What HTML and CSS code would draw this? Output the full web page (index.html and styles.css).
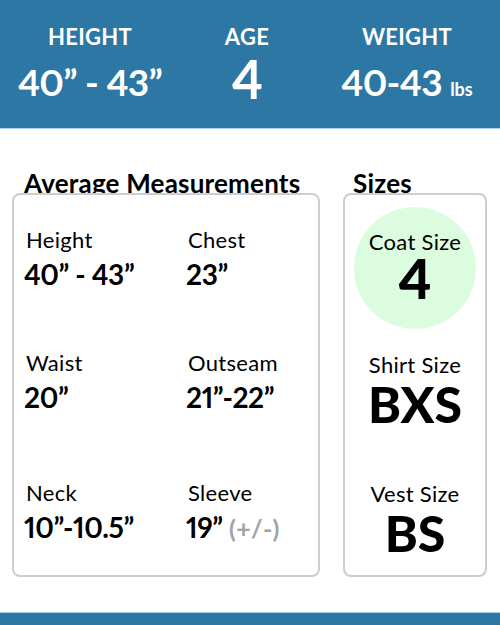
FILE: index.html
```html
<!DOCTYPE html>
<html>

<head>
    <title>Size Chart - Age 4</title>
    <link rel="stylesheet" href="styles.css">
</head>

<body>
    <div id="stats">
        <div class="stat">
            <div class="stat-label">HEIGHT</div>
            <div class="stat-value">40” - 43”</div>
        </div>
        <div class="stat">
            <div class="stat-label">AGE</div>
            <div class="stat-value stat-age">4</div>
        </div>
        <div class="stat">
            <div class="stat-label">WEIGHT</div>
            <div class="stat-value">40-43 <span class="unit">lbs</span></div>
        </div>
    </div>

    <div id="content">
        <div class="panel panel-measure">
            <h2>Average Measurements</h2>
            <div class="box measure-grid">
                <div class="item">
                    <div class="item-label">Height</div>
                    <div class="item-value">40” - 43”</div>
                </div>
                <div class="item">
                    <div class="item-label">Chest</div>
                    <div class="item-value">23”</div>
                </div>
                <div class="item">
                    <div class="item-label">Waist</div>
                    <div class="item-value">20”</div>
                </div>
                <div class="item">
                    <div class="item-label">Outseam</div>
                    <div class="item-value">21”-22”</div>
                </div>
                <div class="item">
                    <div class="item-label">Neck</div>
                    <div class="item-value">10”-10.5”</div>
                </div>
                <div class="item">
                    <div class="item-label">Sleeve</div>
                    <div class="item-value">19” <span class="approx">(+/-)</span></div>
                </div>
            </div>
        </div>

        <div class="panel panel-sizes">
            <h2>Sizes</h2>
            <div class="box sizes-list">
                <div class="size size-coat">
                    <div class="size-label">Coat Size</div>
                    <div class="size-value coat-value">4</div>
                </div>
                <div class="size size-shirt">
                    <div class="size-label">Shirt Size</div>
                    <div class="size-value">BXS</div>
                </div>
                <div class="size size-vest">
                    <div class="size-label">Vest Size</div>
                    <div class="size-value">BS</div>
                </div>
            </div>
        </div>
    </div>

    <div id="footer"></div>
</body>

</html>
```

FILE: styles.css
```css
body {
    margin: 0;
    padding: 0;
    font-family: Lato, "Open Sans", sans-serif;
    font-variant-numeric: proportional-nums;
    color: #000;
    background: #fff;
}

#stats {
    display: grid;
    grid-template-columns: 180px 134px 186px;
    height: 129px;
    background-color: #2d77a4;
    border-bottom: 1px solid #a9d3ee;
    color: #fff;
    text-align: center;
    box-sizing: border-box;
}

.stat-label {
    padding-top: 25px;
    font-size: 22px;
    line-height: 24px;
    letter-spacing: 0.3px;
    font-weight: 700;
}

.stat-value {
    margin-top: 11px;
    font-size: 37px;
    line-height: 44px;
    letter-spacing: -0.7px;
    font-weight: 700;
}

.stat-age {
    margin-top: 8px;
    font-size: 53px;
}

.unit {
    font-size: 18px;
    letter-spacing: 0;
}

#content {
    display: flex;
    gap: 23px;
    padding: 39px 13px 0 12px;
}

.panel h2 {
    position: relative;
    margin: 0 0 -5px 12px;
    font-size: 26px;
    line-height: 30px;
    letter-spacing: 0.2px;
    font-weight: 700;
}

.panel-sizes h2 {
    margin-left: 10px;
}

.box {
    position: relative;
    background: #fff;
    border: 2px solid #cdcdcd;
    border-radius: 8px;
    height: 384px;
    box-sizing: border-box;
}

.panel-measure {
    width: 308px;
}

.panel-sizes {
    flex: 1;
}

.measure-grid {
    display: grid;
    grid-template-columns: 162px 1fr;
    grid-template-rows: 123px 130px auto;
    padding: 33px 0 0 10px;
}

.item-label {
    font-size: 22px;
    line-height: 24px;
    letter-spacing: 0.3px;
    padding-left: 2px;
}

.item-value {
    margin-top: 5px;
    font-size: 28px;
    line-height: 34px;
    letter-spacing: -0.4px;
    font-weight: 700;
}

.approx {
    color: #9ba5aa;
    font-size: 25px;
    letter-spacing: 0.3px;
}

.sizes-list {
    display: flex;
    flex-direction: column;
    align-items: center;
    text-align: center;
}

.size-label {
    font-size: 22px;
    line-height: 22px;
    letter-spacing: 0.3px;
}

.size-value {
    margin-top: 8px;
    font-size: 50px;
    line-height: 40px;
    font-weight: 900;
}

.size-coat {
    width: 122px;
    height: 122px;
    margin-top: 12px;
    border-radius: 50%;
    background-color: #dcfcdf;
    box-sizing: border-box;
    padding-top: 24px;
}

.coat-value {
    margin-top: 3px;
    font-size: 56px;
    line-height: 44px;
}

.size-shirt {
    margin-top: 25px;
}

.size-vest {
    margin-top: 59px;
}

#footer {
    margin-top: 35px;
    height: 12px;
    background-color: #2d77a4;
    border-top: 1px solid #a9d3ee;
}
```
